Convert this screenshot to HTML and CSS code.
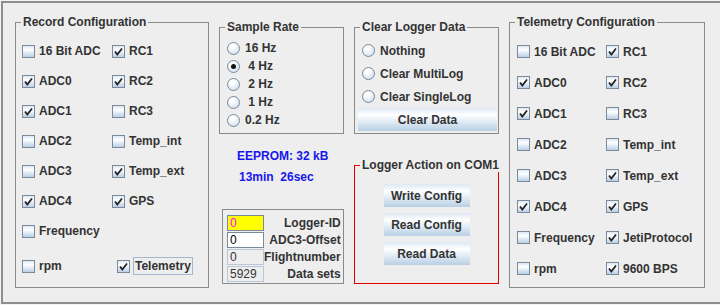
FILE: index.html
```html
<!DOCTYPE html>
<html lang="en">
<head>
  <meta charset="UTF-8" />
  <title>Logger Configuration</title>
  <link rel="stylesheet" href="styles.css">
</head>
<body>
  <div class="window">

    <!-- record configuration -->
    <div class="col col-side">
      <div class="group record">
        <span class="group-title">Record Configuration</span>
        <div class="cbgrid record-grid">
          <label class="cb"><span class="box"></span>16 Bit ADC</label>
          <label class="cb"><span class="box"><svg viewBox="0 0 11 11"><path d="M2 5.5 L4.3 8.5 L9 2.5"/></svg></span>RC1</label>
          <label class="cb"><span class="box"><svg viewBox="0 0 11 11"><path d="M2 5.5 L4.3 8.5 L9 2.5"/></svg></span>ADC0</label>
          <label class="cb"><span class="box"><svg viewBox="0 0 11 11"><path d="M2 5.5 L4.3 8.5 L9 2.5"/></svg></span>RC2</label>
          <label class="cb"><span class="box"><svg viewBox="0 0 11 11"><path d="M2 5.5 L4.3 8.5 L9 2.5"/></svg></span>ADC1</label>
          <label class="cb"><span class="box"></span>RC3</label>
          <label class="cb"><span class="box"></span>ADC2</label>
          <label class="cb"><span class="box"></span>Temp_int</label>
          <label class="cb"><span class="box"></span>ADC3</label>
          <label class="cb"><span class="box"><svg viewBox="0 0 11 11"><path d="M2 5.5 L4.3 8.5 L9 2.5"/></svg></span>Temp_ext</label>
          <label class="cb"><span class="box"><svg viewBox="0 0 11 11"><path d="M2 5.5 L4.3 8.5 L9 2.5"/></svg></span>ADC4</label>
          <label class="cb"><span class="box"><svg viewBox="0 0 11 11"><path d="M2 5.5 L4.3 8.5 L9 2.5"/></svg></span>GPS</label>
          <label class="cb"><span class="box"></span>Frequency</label>
          <span></span>
          <label class="cb"><span class="box"></span>rpm</label>
          <label class="cb shifted"><span class="box"><svg viewBox="0 0 11 11"><path d="M2 5.5 L4.3 8.5 L9 2.5"/></svg></span><span class="focus">Telemetry</span></label>
        </div>
      </div>
    </div>

    <!-- sample rate, eeprom, logger id -->
    <div class="col col-mid">
      <div class="group small">
        <span class="group-title">Sample Rate</span>
        <div class="radios rate">
          <label class="rb"><span class="circle"></span>16 Hz</label>
          <label class="rb"><span class="circle on"></span> 4 Hz</label>
          <label class="rb"><span class="circle"></span> 2 Hz</label>
          <label class="rb"><span class="circle"></span> 1 Hz</label>
          <label class="rb"><span class="circle"></span>0.2 Hz</label>
        </div>
      </div>
      <div class="eeprom first">EEPROM: 32 kB</div>
      <div class="eeprom second">13min  26sec</div>
      <div class="group ids">
        <div class="idgrid">
          <span class="field yellow">0</span><span class="idlabel">Logger-ID</span>
          <span class="field white">0</span><span class="idlabel">ADC3-Offset</span>
          <span class="field fixed">0</span><span class="idlabel">Flightnumber</span>
          <span class="field fixed">5929</span><span class="idlabel">Data sets</span>
        </div>
      </div>
    </div>

    <!-- clear data and actions -->
    <div class="col col-mid">
      <div class="group small clear">
        <span class="group-title">Clear Logger Data</span>
        <div class="radios wipe">
          <label class="rb"><span class="circle"></span>Nothing</label>
          <label class="rb"><span class="circle"></span>Clear MultiLog</label>
          <label class="rb"><span class="circle"></span>Clear SingleLog</label>
        </div>
        <button class="btn wide">Clear Data</button>
      </div>
      <div class="group action">
        <span class="group-title">Logger Action on COM1</span>
        <button class="btn">Write Config</button>
        <button class="btn">Read Config</button>
        <button class="btn">Read Data</button>
      </div>
    </div>

    <!-- telemetry configuration -->
    <div class="col col-side">
      <div class="group telemetry">
        <span class="group-title">Telemetry Configuration</span>
        <div class="cbgrid tele-grid">
          <label class="cb"><span class="box"></span>16 Bit ADC</label>
          <label class="cb"><span class="box"><svg viewBox="0 0 11 11"><path d="M2 5.5 L4.3 8.5 L9 2.5"/></svg></span>RC1</label>
          <label class="cb"><span class="box"><svg viewBox="0 0 11 11"><path d="M2 5.5 L4.3 8.5 L9 2.5"/></svg></span>ADC0</label>
          <label class="cb"><span class="box"><svg viewBox="0 0 11 11"><path d="M2 5.5 L4.3 8.5 L9 2.5"/></svg></span>RC2</label>
          <label class="cb"><span class="box"><svg viewBox="0 0 11 11"><path d="M2 5.5 L4.3 8.5 L9 2.5"/></svg></span>ADC1</label>
          <label class="cb"><span class="box"></span>RC3</label>
          <label class="cb"><span class="box"></span>ADC2</label>
          <label class="cb"><span class="box"></span>Temp_int</label>
          <label class="cb"><span class="box"></span>ADC3</label>
          <label class="cb"><span class="box"><svg viewBox="0 0 11 11"><path d="M2 5.5 L4.3 8.5 L9 2.5"/></svg></span>Temp_ext</label>
          <label class="cb"><span class="box"><svg viewBox="0 0 11 11"><path d="M2 5.5 L4.3 8.5 L9 2.5"/></svg></span>ADC4</label>
          <label class="cb"><span class="box"><svg viewBox="0 0 11 11"><path d="M2 5.5 L4.3 8.5 L9 2.5"/></svg></span>GPS</label>
          <label class="cb"><span class="box"></span>Frequency</label>
          <label class="cb"><span class="box"><svg viewBox="0 0 11 11"><path d="M2 5.5 L4.3 8.5 L9 2.5"/></svg></span>JetiProtocol</label>
          <label class="cb"><span class="box"></span>rpm</label>
          <label class="cb"><span class="box"><svg viewBox="0 0 11 11"><path d="M2 5.5 L4.3 8.5 L9 2.5"/></svg></span>9600 BPS</label>
        </div>
      </div>
    </div>

  </div>
</body>
</html>
```

FILE: styles.css
```css
body {
  margin: 0;
  background: #f4f4f4;
  font-family: "Liberation Sans", Arial, sans-serif;
  font-size: 12px;
  font-weight: bold;
  color: #333;
}
.window {
  margin: 1px 0 0 1px;
  width: 713px;
  height: 299px;
  border: 2px solid #8e8e8e;
  background: #eeeeee;
  display: flex;
  align-items: flex-start;
  gap: 10px;
  padding-left: 12px;
  box-sizing: content-box;
}
.window > .col:first-child {
  margin-left: -12px;
  padding-left: 12px;
}
.col {
  display: flex;
  flex-direction: column;
}
.col-side {
  padding-top: 19px;
}
.col-mid {
  padding-top: 24px;
}
.group {
  position: relative;
  border: 1px solid #8a8a8a;
  box-sizing: border-box;
}
.group-title {
  position: absolute;
  top: -8px;
  left: 5px;
  padding: 0 2px;
  line-height: 14px;
  background: #eeeeee;
  white-space: nowrap;
}
.record {
  width: 194px;
  height: 266px;
  padding: 13px 0 0 6px;
}
.telemetry {
  width: 196px;
  height: 266px;
  padding: 13px 0 0 7px;
}
.cbgrid {
  display: grid;
  align-items: center;
}
.record-grid {
  grid-template-columns: 90px auto;
  grid-template-rows: repeat(7, 30px) 40px;
}
.tele-grid {
  grid-template-columns: 89px auto;
  grid-auto-rows: 31px;
}
.cb {
  display: flex;
  align-items: center;
  gap: 4px;
  line-height: 16px;
  white-space: nowrap;
}
.box {
  width: 13px;
  height: 13px;
  box-sizing: border-box;
  border: 1px solid #7a8a99;
  background: linear-gradient(#dde8f3, #ffffff 35%, #b8cfe5);
  display: flex;
}
.box svg {
  width: 11px;
  height: 11px;
  fill: none;
  stroke: #222;
  stroke-width: 1.8;
}
.shifted {
  margin-left: 5px;
  gap: 3px;
}
.focus {
  border: 1px solid #a3b8cc;
  padding: 0 1px;
}
.small {
  width: 125px;
  height: 107px;
}
.radios {
  display: grid;
  padding-left: 7px;
}
.rate {
  padding-top: 11px;
  grid-auto-rows: 18px;
}
.wipe {
  padding-top: 11px;
  grid-auto-rows: 23px;
}
.rb {
  display: flex;
  align-items: center;
  gap: 5px;
  white-space: pre;
}
.circle {
  width: 13px;
  height: 13px;
  box-sizing: border-box;
  border: 1px solid #7a8a99;
  border-radius: 50%;
  background: radial-gradient(circle at 40% 30%, #ffffff 20%, #c4d6ea 100%);
  display: flex;
  align-items: center;
  justify-content: center;
}
.circle.on::after {
  content: "";
  width: 5px;
  height: 5px;
  border-radius: 50%;
  background: #111;
}
.clear {
  width: 145px;
}
.btn {
  font-family: inherit;
  font-size: 12px;
  font-weight: bold;
  color: #333;
  border: none;
  padding: 0;
  height: 23px;
  width: 86px;
  background: linear-gradient(#dde8f3 0%, #ffffff 30%, #b8cfe5 100%);
}
.wide {
  width: 139px;
  margin-left: 3px;
}
.action {
  width: 145px;
  height: 119px;
  margin-top: 31px;
  border-color: #e00000;
  display: flex;
  flex-direction: column;
  align-items: center;
  gap: 6px;
  padding-top: 18px;
}
.eeprom {
  color: #1616ee;
  line-height: 16px;
}
.first {
  margin-top: 14px;
  padding-left: 18px;
}
.second {
  margin-top: 5px;
  padding-left: 20px;
  white-space: pre;
}
.ids {
  width: 122px;
  height: 75px;
  margin: 24px 0 0 3px;
  padding: 4px 4px 0 4px;
}
.idgrid {
  display: grid;
  grid-template-columns: 37px 1fr;
  grid-auto-rows: 17px;
  align-items: center;
}
.idlabel {
  text-align: right;
  line-height: 16px;
}
.field {
  height: 16px;
  box-sizing: border-box;
  border: 1px solid #7a8a99;
  padding-left: 2px;
  font-weight: normal;
  line-height: 14px;
  color: #333;
}
.yellow {
  background: #ffff00;
  color: #ff00ff;
}
.white {
  background: #ffffff;
  color: #000;
}
.fixed {
  border-color: #b8c8d8;
  background: #eeeeee;
}
```
